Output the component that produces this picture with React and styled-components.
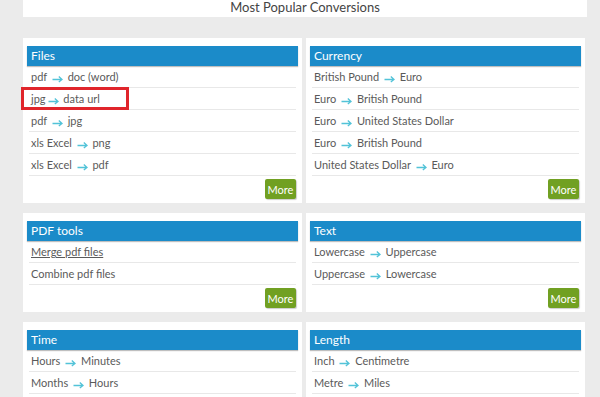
import React from 'react';
import styled, { createGlobalStyle } from 'styled-components';

const GlobalStyle = createGlobalStyle`
  html, body {
    margin: 0;
    padding: 0;
    background: #ebebeb;
  }
  body {
    font-family: 'Lato', 'Open Sans', sans-serif;
    color: #555;
  }
`;

const Page = styled.div`
  width: 564px;
  margin-left: 23px;
`;

const Banner = styled.div`
  height: 17px;
  background: #fff;
  text-align: center;
  font-size: 13px;
  line-height: 14px;
  color: #444;
`;

const Grid = styled.div`
  display: grid;
  grid-template-columns: 279px 279px;
  column-gap: 4px;
  row-gap: 10px;
  margin-top: 21px;
`;

const Card = styled.div`
  background: #fff;
  padding: 8px 4px 4px;
  align-self: start;
`;

const Header = styled.div`
  height: 20px;
  line-height: 20px;
  padding-left: 4px;
  background: #1b8bc9;
  color: #fff;
  font-size: 12px;
  box-shadow: 0 1px 1px rgba(0, 0, 0, 0.25);
`;

const Row = styled.div`
  position: relative;
  margin: 0 2px;
  height: 21px;
  line-height: 21px;
  padding-left: 2px;
  border-bottom: 1px solid #e8e8e8;
  font-size: 11px;
  color: #5a5a5a;
  white-space: nowrap;
  text-decoration: ${(p) => (p.$underline ? 'underline' : 'none')};
`;

const Highlight = styled.span`
  position: absolute;
  left: -8px;
  top: -1px;
  width: 108px;
  height: 23px;
  box-sizing: border-box;
  border: 3px solid #e0252b;
`;

const Footer = styled.div`
  display: flex;
  justify-content: flex-end;
  padding: 3px 2px 0;
`;

const MoreButton = styled.button`
  width: 31px;
  height: 20px;
  padding: 0;
  border: none;
  border-radius: 2px;
  background: #71a022;
  color: #fff;
  font-family: inherit;
  font-size: 11px;
  box-shadow: 1px 1px 1px rgba(0, 0, 0, 0.2);
`;

const ArrowSvg = styled.svg`
  vertical-align: -2px;
  margin: 0 2px;
`;

const Arrow = () => (
  <ArrowSvg width="11" height="8" viewBox="0 0 11 8">
    <path d="M0.5 4.5H10M6.8 1.6L10 4.5L6.8 7" fill="none" stroke="#52c3d8" strokeWidth="1.3" />
  </ArrowSvg>
);

const panels = [
  {
    title: 'Files',
    rows: [['pdf', 'doc (word)'], ['jpg', 'data url', 'tight'], ['pdf', 'jpg'], ['xls Excel', 'png'], ['xls Excel', 'pdf']],
  },
  {
    title: 'Currency',
    rows: [
      ['British Pound', 'Euro'],
      ['Euro', 'British Pound'],
      ['Euro', 'United States Dollar'],
      ['Euro', 'British Pound'],
      ['United States Dollar', 'Euro'],
    ],
  },
  { title: 'PDF tools', rows: [['Merge pdf files', null, 'underline'], ['Combine pdf files']] },
  { title: 'Text', rows: [['Lowercase', 'Uppercase'], ['Uppercase', 'Lowercase']] },
  { title: 'Time', rows: [['Hours', 'Minutes'], ['Months', 'Hours']] },
  { title: 'Length', rows: [['Inch', 'Centimetre'], ['Metre', 'Miles']] },
];

function ConversionRow({ from, to, flag }) {
  return (
    <Row $underline={flag === 'underline'}>
      {from}
      {to && (
        <>
          {flag === 'tight' ? '' : ' '}
          <Arrow /> {to}
        </>
      )}
      {flag === 'tight' && <Highlight />}
    </Row>
  );
}

function App() {
  return (
    <Page>
      <GlobalStyle />
      <Banner>Most Popular Conversions</Banner>
      <Grid>
        {panels.map((panel) => (
          <Card key={panel.title}>
            <Header>{panel.title}</Header>
            {panel.rows.map(([from, to, flag], i) => (
              <ConversionRow key={i} from={from} to={to} flag={flag} />
            ))}
            <Footer>
              <MoreButton>More</MoreButton>
            </Footer>
          </Card>
        ))}
      </Grid>
    </Page>
  );
}

export default App;
